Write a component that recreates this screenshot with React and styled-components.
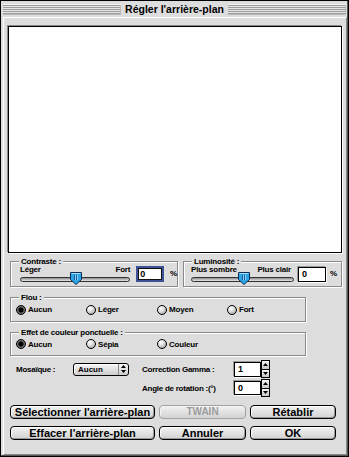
import React from 'react';
import styled, { createGlobalStyle } from 'styled-components';

const GlobalStyle = createGlobalStyle`
  html, body {
    margin: 0;
    padding: 0;
    background: #dddddd;
  }
  body {
    font-family: "Liberation Sans", Arial, sans-serif;
    color: #000;
  }
  * {
    box-sizing: border-box;
  }
`;

const Window = styled.div`
  width: 349px;
  height: 457px;
  border: 1px solid #000;
  background: #dddddd;
  box-shadow: inset -1px -1px 0 #555;
  display: flex;
  flex-direction: column;
`;

const TitleBar = styled.div`
  height: 16px;
  padding: 3px 2px 1px 2px;
  display: flex;
  align-items: stretch;
`;

const Stripes = styled.div`
  flex: 1;
  height: 11px;
  border-top: 1px solid #f4f4f4;
  background: repeating-linear-gradient(
    to bottom,
    #9c9c9c 0 1px,
    #e6e6e6 1px 2px
  );
  box-shadow: inset -1px -1px 0 #b8b8b8;
`;

const Title = styled.div`
  padding: 0 4px;
  font-size: 10.5px;
  font-weight: bold;
  line-height: 11px;
  white-space: nowrap;
`;

const Body = styled.div`
  flex: 1;
  margin: 0 1px 1px 2px;
  border: 1px solid;
  border-color: #fff #888 #888 #fff;
  padding: 8px 4px 0 4px;
  display: flex;
  flex-direction: column;
`;

const Preview = styled.div`
  height: 227px;
  background: #fff;
  border: 1px solid #000;
  box-shadow: -1px -1px 0 #888, 1px 1px 0 #fff;
`;

const SliderRow = styled.div`
  display: flex;
  gap: 5px;
  margin: 8px 0 0 2px;
`;

const Group = styled.div`
  position: relative;
  width: ${p => p.$w}px;
  height: ${p => p.$h}px;
  margin: ${p => p.$mt || 0}px 0 0 ${p => p.$ml || 0}px;
  border: 1px solid #8a8a8a;
  box-shadow: inset 1px 1px 0 #fff, 1px 1px 0 #fff;
`;

const GroupTitle = styled.span`
  position: absolute;
  top: -5px;
  left: ${p => p.$left || 8}px;
  padding: 0 2px;
  background: #dddddd;
  font-size: 8px;
  font-weight: bold;
  line-height: 9px;
  letter-spacing: -0.2px;
  white-space: nowrap;
`;

const SliderContent = styled.div`
  display: flex;
  align-items: flex-start;
  padding: 4px 0 0 ${p => p.$pl}px;
  gap: ${p => p.$gap}px;
`;

const SliderCol = styled.div`
  width: ${p => p.$w}px;
  display: flex;
  flex-direction: column;
`;

const Ends = styled.div`
  display: flex;
  justify-content: space-between;
  padding-right: ${p => p.$pr || 0}px;
  height: 7px;
  font-size: 8px;
  font-weight: bold;
  line-height: 7px;
  letter-spacing: -0.2px;
  white-space: nowrap;
`;

const Track = styled.div`
  position: relative;
  margin-top: 4px;
  height: 5px;
  border: 1px solid #333;
  border-radius: 3px;
  background: linear-gradient(#8c8c8c, #e8e8e8);
`;

const Thumb = styled.svg`
  position: absolute;
  top: -6px;
  left: calc(50% - 5px);
`;

const Field = styled.div`
  width: ${p => p.$w}px;
  height: ${p => p.$h}px;
  margin-top: ${p => p.$mt || 0}px;
  background: #fff;
  border: ${p => (p.$focused ? '2px solid #3f5296' : '1px solid #000')};
  box-shadow: ${p =>
    p.$focused ? 'inset 0 0 0 1px #111' : '-1px -1px 0 #999, 1px 1px 0 #fff'};
  padding-left: ${p => (p.$focused ? 2 : 3)}px;
  font-size: 9px;
  font-weight: bold;
  line-height: ${p => p.$h - (p.$focused ? 4 : 2)}px;
`;

const Unit = styled.span`
  font-size: 8px;
  font-weight: bold;
  line-height: 16px;
`;

const RadioRow = styled.div`
  display: grid;
  grid-template-columns: 70px 71px 70px 1fr;
  align-items: center;
  height: 100%;
  padding-left: 5px;
`;

const Radio = styled.label`
  display: flex;
  align-items: center;
  gap: 2px;
  font-size: 8px;
  font-weight: bold;
  letter-spacing: -0.2px;
  white-space: nowrap;
`;

const Dot = styled.span`
  width: 10px;
  height: 10px;
  border-radius: 50%;
  border: 1px solid #000;
  background: ${p =>
    p.$on
      ? 'radial-gradient(circle, #000 0 2.2px, #5a5a5a 2.8px, #9a9a9a 100%)'
      : 'radial-gradient(circle at 35% 30%, #fff 0, #e4e4e4 35%, #8e8e8e 100%)'};
`;

const Options = styled.div`
  display: grid;
  grid-template-columns: 57px 56px 105px 27px 9px;
  grid-template-rows: 18px 18px;
  row-gap: 1px;
  align-items: center;
  margin: 4px 0 0 8px;
`;

const Label = styled.span`
  padding-left: ${p => p.$pl || 0}px;
  font-size: 8px;
  font-weight: bold;
  letter-spacing: -0.25px;
  white-space: nowrap;
`;

const Popup = styled.div`
  height: 13px;
  display: flex;
  align-items: stretch;
  border: 1px solid #000;
  border-radius: 3px;
  background: linear-gradient(#f6f6f6, #cdcdcd);
  box-shadow: inset 1px 1px 0 #fff;
`;

const PopupText = styled.span`
  flex: 1;
  padding-left: 4px;
  font-size: 8px;
  font-weight: bold;
  line-height: 11px;
`;

const PopupArrows = styled.span`
  width: 10px;
  border-left: 1px solid #8a8a8a;
  display: flex;
  align-items: center;
  justify-content: center;
`;

const Stepper = styled.div`
  width: 9px;
  height: 18px;
  display: flex;
  flex-direction: column;
  margin-left: 0;
`;

const Step = styled.span`
  flex: 1;
  display: flex;
  align-items: center;
  justify-content: center;
  border: 1px solid #000;
  background: linear-gradient(#f6f6f6, #c4c4c4);
  & + & {
    margin-top: -1px;
  }
`;

const Buttons = styled.div`
  display: grid;
  grid-template-columns: 145px 87px 86px;
  grid-template-rows: 14px 14px;
  column-gap: 4px;
  row-gap: 7px;
  margin: 8px 0 0 2px;
`;

const Button = styled.button`
  height: 14px;
  padding: 0;
  margin: 0;
  display: flex;
  align-items: center;
  justify-content: center;
  border: 1px solid ${p => (p.disabled ? '#a2a2a2' : '#000')};
  border-radius: 4px;
  background: linear-gradient(#f2f2f2, #d2d2d2);
  box-shadow: ${p =>
    p.disabled ? 'inset 1px 1px 0 #f4f4f4' : 'inset 1px 1px 0 #fff, inset -1px -1px 0 #9a9a9a'};
  color: ${p => (p.disabled ? '#9c9c9c' : '#000')};
  font-family: "Liberation Sans", Arial, sans-serif;
  font-size: ${p => (p.$small ? 10 : 11)}px;
  font-weight: bold;
  line-height: 12px;
  white-space: nowrap;
`;

const SliderThumb = () => (
  <Thumb width="12" height="13" viewBox="0 0 12 13">
    <path d="M0.5 0.5 H11.5 V7.5 L6 12.5 L0.5 7.5 Z" fill="#2ea6e6" stroke="#0a2c55" />
    <path d="M1.5 1.5 H10.5" stroke="#a8e0ff" />
    <path d="M4.5 3 V8 M6.5 3 V8" stroke="#145e9c" />
    <path d="M5.5 3 V8 M7.5 3 V8" stroke="#8fd3fa" />
  </Thumb>
);

const Arrow = ({ down }) => (
  <svg width="5" height="3" viewBox="0 0 5 3">
    <path d={down ? 'M0 0 H5 L2.5 3 Z' : 'M0 3 H5 L2.5 0 Z'} fill="#000" />
  </svg>
);

const SpinBox = () => (
  <Stepper>
    <Step><Arrow /></Step>
    <Step><Arrow down /></Step>
  </Stepper>
);

const RadioGroup = ({ title, options, h, mt }) => (
  <Group $w={296} $h={h} $mt={mt} $ml={2}>
    <GroupTitle>{title}</GroupTitle>
    <RadioRow>
      {options.map((o, i) => (
        <Radio key={o}>
          <Dot $on={i === 0} />
          {o}
        </Radio>
      ))}
    </RadioRow>
  </Group>
);

const App = () => (
  <>
    <GlobalStyle />
    <Window>
      <TitleBar>
        <Stripes />
        <Title>Régler l'arrière-plan</Title>
        <Stripes />
      </TitleBar>
      <Body>
        <Preview />

        <SliderRow>
          <Group $w={168} $h={26}>
            <GroupTitle>Contraste :</GroupTitle>
            <SliderContent $pl={9} $gap={6}>
              <SliderCol $w={112}>
                <Ends>
                  <span>Léger</span>
                  <span>Fort</span>
                </Ends>
                <Track>
                  <SliderThumb />
                </Track>
              </SliderCol>
              <Field $w={28} $h={16} $focused>0</Field>
              <Unit>%</Unit>
            </SliderContent>
          </Group>
          <Group $w={159} $h={26}>
            <GroupTitle>Luminosité :</GroupTitle>
            <SliderContent $pl={7} $gap={4}>
              <SliderCol $w={103}>
                <Ends $pr={3}>
                  <span>Plus sombre</span>
                  <span>Plus clair</span>
                </Ends>
                <Track>
                  <SliderThumb />
                </Track>
              </SliderCol>
              <Field $w={28} $h={15} $mt={1}>0</Field>
              <Unit>%</Unit>
            </SliderContent>
          </Group>
        </SliderRow>

        <RadioGroup title="Flou :" options={['Aucun', 'Léger', 'Moyen', 'Fort']} h={25} mt={10} />
        <RadioGroup
          title="Effet de couleur ponctuelle :"
          options={['Aucun', 'Sépia', 'Couleur']}
          h={24}
          mt={10}
        />

        <Options>
          <Label>Mosaïque :</Label>
          <Popup>
            <PopupText>Aucun</PopupText>
            <PopupArrows>
              <svg width="5" height="8" viewBox="0 0 5 8">
                <path d="M0 3 H5 L2.5 0 Z M0 5 H5 L2.5 8 Z" fill="#000" />
              </svg>
            </PopupArrows>
          </Popup>
          <Label $pl={13}>Correction Gamma :</Label>
          <Field $w={27} $h={15}>1</Field>
          <SpinBox />

          <span />
          <span />
          <Label $pl={13}>Angle de rotation :(°)</Label>
          <Field $w={27} $h={14}>0</Field>
          <SpinBox />
        </Options>

        <Buttons>
          <Button>Sélectionner l'arrière-plan</Button>
          <Button disabled $small>TWAIN</Button>
          <Button>Rétablir</Button>
          <Button>Effacer l'arrière-plan</Button>
          <Button>Annuler</Button>
          <Button>OK</Button>
        </Buttons>
      </Body>
    </Window>
  </>
);

export default App;
